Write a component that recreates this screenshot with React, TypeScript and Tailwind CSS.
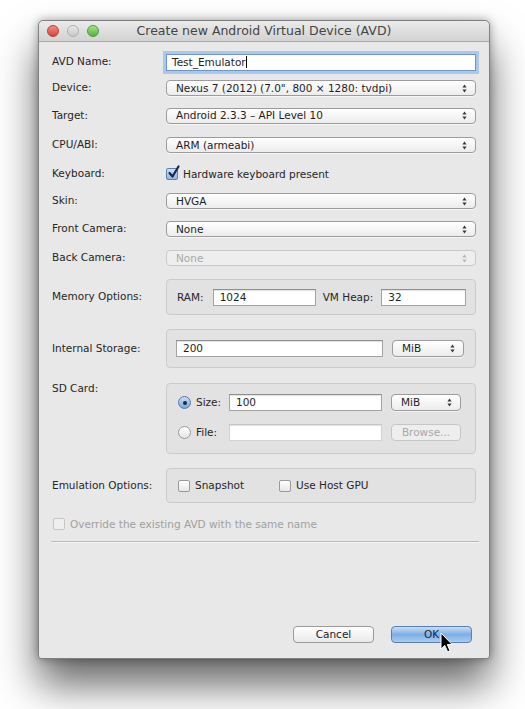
import React from "react";

const Arrows = ({ dim = false }: { dim?: boolean }) => (
  <svg width="5" height="9" viewBox="0 0 5 9" className="shrink-0">
    <path d="M2.5 0.5 L4.6 3.4 L0.4 3.4 Z" fill={dim ? "#b5b5b5" : "#3a3a3a"} />
    <path d="M2.5 8.5 L4.6 5.6 L0.4 5.6 Z" fill={dim ? "#b5b5b5" : "#3a3a3a"} />
  </svg>
);

const Select = ({ value, dim = false, className = "" }: { value: string; dim?: boolean; className?: string }) => (
  <div
    className={
      "h-[16px] flex items-center justify-between pl-[9px] pr-[8px] rounded-[4px] border " +
      (dim
        ? "border-[#c9c9c9] bg-[#eeeeee] text-[#a9a9a9] "
        : "border-[#9c9c9c] bg-gradient-to-b from-[#ffffff] to-[#ececec] text-[#1e1e1e] shadow-[0_1px_0_rgba(255,255,255,0.6)] ") +
      className
    }
  >
    <span className="leading-none">{value}</span>
    <Arrows dim={dim} />
  </div>
);

const Input = ({ value = "", className = "" }: { value?: string; className?: string }) => (
  <div
    className={
      "h-[17px] bg-white border border-[#a3a3a3] border-t-[#8e8e8e] shadow-[inset_0_1px_1px_rgba(0,0,0,0.12)] flex items-center pl-[6px] text-[#1e1e1e] " +
      className
    }
  >
    <span className="leading-none">{value}</span>
  </div>
);

const Check = ({ checked = false, dim = false }: { checked?: boolean; dim?: boolean }) => (
  <div
    className={
      "relative w-[12px] h-[12px] rounded-[2px] border shrink-0 " +
      (checked
        ? "border-[#5d7fae] bg-gradient-to-b from-[#cfe0f5] to-[#8fb6e6]"
        : dim
        ? "border-[#c6c6c6] bg-[#efefef]"
        : "border-[#9a9a9a] bg-gradient-to-b from-[#ffffff] to-[#e6e6e6]")
    }
  >
    {checked && (
      <svg width="14" height="14" viewBox="0 0 14 14" className="absolute left-[0px] top-[-4px]">
        <path d="M2.5 8 L5.5 11.5 L11.5 1.5" fill="none" stroke="#13294f" strokeWidth="2.2" strokeLinecap="round" strokeLinejoin="round" />
      </svg>
    )}
  </div>
);

const Radio = ({ on = false }: { on?: boolean }) => (
  <div
    className={
      "w-[13px] h-[13px] rounded-full border flex items-center justify-center shrink-0 " +
      (on
        ? "border-[#5878a8] bg-gradient-to-b from-[#c9ddf4] to-[#7aa8de]"
        : "border-[#9a9a9a] bg-gradient-to-b from-[#ffffff] to-[#e4e4e4]")
    }
  >
    {on && <div className="w-[4px] h-[4px] rounded-full bg-[#1b2b44]" />}
  </div>
);

const Row = ({ label, h, children }: { label: string; h: string; children: React.ReactNode }) => (
  <div className={"flex items-center " + h}>
    <div className="w-[114px] shrink-0">{label}</div>
    <div className="w-[310px]">{children}</div>
  </div>
);

const Group = ({ className = "", children }: { className?: string; children: React.ReactNode }) => (
  <div className={"w-[310px] rounded-[4px] border border-[#cbcbcb] bg-[#e2e2e2] " + className}>{children}</div>
);

export default function App() {
  return (
    <div className="w-[525px] h-[709px] bg-white pt-[20px] pl-[38px] font-['DejaVu_Sans',sans-serif] text-[10.5px] text-[#262626] overflow-hidden">
      <div className="relative w-[452px] h-[639px] bg-[#e8e8e8] rounded-t-[5px] rounded-b-[3px] border border-[#7f7f7f] shadow-[0_26px_42px_rgba(0,0,0,0.6),0_0_10px_rgba(0,0,0,0.35)] flex flex-col">
        {/* Title bar */}
        <div className="relative h-[21px] shrink-0 rounded-t-[5px] bg-gradient-to-b from-[#ebebeb] to-[#d2d2d2] border-b border-[#a9a9a9] flex items-center justify-center">
          <div className="absolute left-[8px] top-[4px] flex gap-[8px]">
            <div className="w-[12px] h-[12px] rounded-full border border-[#b5423d] bg-gradient-to-b from-[#f28b84] to-[#d9403a]" />
            <div className="w-[12px] h-[12px] rounded-full border border-[#b0b0b0] bg-gradient-to-b from-[#e8e8e8] to-[#c9c9c9]" />
            <div className="w-[12px] h-[12px] rounded-full border border-[#4f9b3c] bg-gradient-to-b from-[#a6e08c] to-[#4fb541]" />
          </div>
          <span className="text-[12.5px] text-[#444] leading-none">Create new Android Virtual Device (AVD)</span>
        </div>

        {/* Content */}
        <div className="flex flex-col pl-[13px] pr-[13px] pt-[7px] flex-1">
          <Row label="AVD Name:" h="h-[26px]">
            <div className="h-[17px] bg-white border border-[#6f95c7] ring-[3px] ring-[#a9c8ec] flex items-center pl-[5px] text-[#1e1e1e]">
              <span className="leading-none">Test_Emulator</span>
              <span className="w-[1px] h-[12px] bg-black" />
            </div>
          </Row>
          <Row label="Device:" h="h-[26px]">
            <Select value={'Nexus 7 (2012) (7.0", 800 × 1280: tvdpi)'} />
          </Row>
          <Row label="Target:" h="h-[29px]">
            <Select value="Android 2.3.3 – API Level 10" />
          </Row>
          <Row label="CPU/ABI:" h="h-[30px]">
            <Select value="ARM (armeabi)" />
          </Row>
          <Row label="Keyboard:" h="h-[28px]">
            <div className="flex items-center gap-[5px]">
              <Check checked />
              <span className="leading-none">Hardware keyboard present</span>
            </div>
          </Row>
          <Row label="Skin:" h="h-[26px]">
            <Select value="HVGA" />
          </Row>
          <Row label="Front Camera:" h="h-[30px]">
            <Select value="None" />
          </Row>
          <Row label="Back Camera:" h="h-[28px]">
            <Select value="None" dim />
          </Row>

          <div className="flex items-center mt-[7px]">
            <div className="w-[114px] shrink-0">Memory Options:</div>
            <Group className="h-[36px] flex items-center pl-[10px] pr-[9px]">
              <span className="leading-none">RAM:</span>
              <Input value="1024" className="ml-[9px] w-[103px]" />
              <span className="leading-none ml-[7px]">VM Heap:</span>
              <Input value="32" className="ml-[8px] flex-1" />
            </Group>
          </div>

          <div className="flex items-center mt-[14px]">
            <div className="w-[114px] shrink-0">Internal Storage:</div>
            <Group className="h-[39px] flex items-center pl-[9px] pr-[11px]">
              <Input value="200" className="w-[207px]" />
              <Select value="MiB" className="ml-[9px] flex-1 h-[17px] pl-[8px]" />
            </Group>
          </div>

          <div className="flex items-start mt-[15px]">
            <div className="w-[114px] shrink-0 -mt-[2px]">SD Card:</div>
            <Group className="h-[71px] flex flex-col pl-[11px] pr-[14px] pt-[10px] gap-[13px]">
              <div className="flex items-center h-[17px]">
                <Radio on />
                <span className="leading-none ml-[5px] w-[33px]">Size:</span>
                <Input value="100" className="w-[153px]" />
                <Select value="MiB" className="ml-[9px] flex-1 h-[17px] pl-[8px]" />
              </div>
              <div className="flex items-center h-[17px]">
                <Radio />
                <span className="leading-none ml-[5px] w-[33px]">File:</span>
                <Input className="w-[153px] border-[#d2d2d2] border-t-[#c4c4c4]" />
                <div className="ml-[9px] flex-1 h-[17px] rounded-[4px] border border-[#c6c6c6] bg-[#eeeeee] text-[#a8a8a8] flex items-center justify-center">
                  <span className="leading-none">Browse...</span>
                </div>
              </div>
            </Group>
          </div>

          <div className="flex items-center mt-[14px]">
            <div className="w-[114px] shrink-0">Emulation Options:</div>
            <Group className="h-[35px] flex items-center pl-[11px]">
              <Check />
              <span className="leading-none ml-[5px]">Snapshot</span>
              <div className="ml-[35px]">
                <Check />
              </div>
              <span className="leading-none ml-[5px]">Use Host GPU</span>
            </Group>
          </div>

          <div className="flex items-center h-[20px] mt-[11px] pl-[1px] text-[#a0a0a0]">
            <Check dim />
            <span className="leading-none ml-[5px]">Override the existing AVD with the same name</span>
          </div>

          <div className="mt-[7px] ml-[-1px] mr-[-3px] h-[1px] bg-[#b9b9b9] border-b border-[#f5f5f5] box-content" />

          <div className="flex-1" />

          <div className="flex justify-end gap-[17px] pb-[15px] pr-[4px]">
            <div className="w-[81px] h-[17px] rounded-[4px] border border-[#9b9b9b] bg-gradient-to-b from-[#ffffff] to-[#e9e9e9] flex items-center justify-center text-[#222]">
              <span className="leading-none">Cancel</span>
            </div>
            <div className="w-[81px] h-[17px] rounded-[4px] border border-[#5a7fb3] bg-gradient-to-b from-[#c9def6] via-[#7eaee6] to-[#a9cbf1] flex items-center justify-center text-[#14253f]">
              <span className="leading-none">OK</span>
            </div>
          </div>
        </div>

        {/* Mouse cursor */}
        <svg width="14" height="22" viewBox="0 0 14 22" className="absolute left-[401px] top-[611px]">
          <path d="M1 1 L1 17 L4.8 13.4 L7.6 19.8 L10 18.8 L7.3 12.5 L12.2 12.5 Z" fill="#000" stroke="#fff" strokeWidth="1" strokeLinejoin="round" />
        </svg>
      </div>
    </div>
  );
}
